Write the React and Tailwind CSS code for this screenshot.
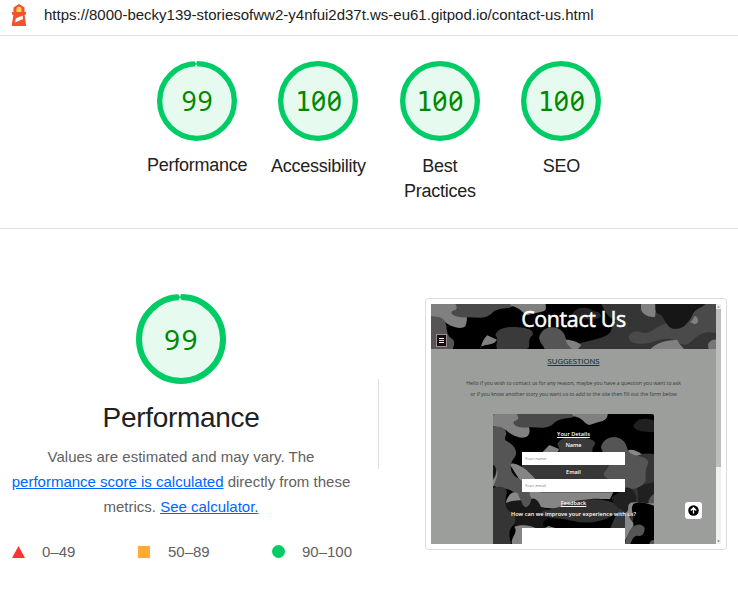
function Digits({ value, small }) {
  const size = small ? 'text-[26.5px] tracking-[0.8px]' : 'text-[28px] tracking-[1.6px]';
  return (
    <span className={`flex items-baseline leading-none text-[#008800] font-['Noto_Sans',sans-serif] slashed-zero ${size}`}>
      {value === '100' && (
        <span className="font-['DejaVu_Sans_Mono',monospace] text-[26px] tracking-[0.1px]">1</span>
      )}
      {value === '100' ? '00' : value}
    </span>
  );
}

function Gauge({ value, small }) {
  const full = value === '100';
  return (
    <div className={`grid place-items-center ${small ? 'size-20' : 'size-[90px]'}`}>
      <svg viewBox="0 0 120 120" className="col-start-1 row-start-1 size-full">
        <circle cx="60" cy="60" r="56" fill="#e6faf0" />
        <circle
          cx="60"
          cy="60"
          r="56"
          fill="none"
          stroke="#00cc66"
          strokeWidth="8"
        />
        {!full && (
          <g fill="#e6faf0">
            <path d="M56 0H60L58.8 4Z" fill="#fff" />
            <path d="M56.5 8.3H61L58.8 4.5Z" />
          </g>
        )}
      </svg>
      <div className="col-start-1 row-start-1 pl-px">
        <Digits value={value} small={small} />
      </div>
    </div>
  );
}

function Lighthouse() {
  return (
    <svg width="18" height="24" viewBox="0 0 18 24" className="ml-[10px]">
      <path d="M9 1 14.5 4.6V9H16v2.7h-1.4L16.3 23H1.7L3.4 11.7H2V9h1.5V4.6Z" fill="#f4512c" />
      <path d="M6.5 9V6.3a2.5 2.5 0 0 1 5 0V9Z" fill="#ffd65a" />
      <path d="m5.7 15.4 6.8-2.9.6 3.5-8 3.4Z" fill="#fff" />
    </svg>
  );
}

function HeaderCamo() {
  return (
    <svg viewBox="9 12 855 135" preserveAspectRatio="none" className="absolute inset-0 size-full">
      <rect x="0" y="0" width="880" height="150" fill="#000" />
      <path d="M9 12H125C108 30 124 55 112 78C100 92 62 79 45 60C38 50 22 58 9 50Z" fill="#808080" />
      <path d="M82 12H262C248 33 215 18 193 38C170 61 145 50 120 52C100 54 72 48 70 38C72 27 95 36 82 12Z" fill="#4a4a4a" />
      <path d="M9 49C25 50 40 50 49 62C62 82 49 103 72 116C84 125 77 140 74 147H9Z" fill="#555" />
      <path d="M158 147C160 130 168 115 178 106L207 119C195 137 180 130 158 140Z" fill="#808080" />
      <path d="M202 105C210 84 235 80 262 81C293 82 325 90 312 107C293 121 316 147 290 147H207C200 132 215 120 202 105Z" fill="#3a3a3a" />
      <path d="M245 12H353C352 24 360 32 340 35L298 45C281 39 280 24 250 17Z" fill="#808080" />
      <path d="M430 47C438 26 463 16 491 29C504 38 518 32 519 49C510 64 470 58 445 56Z" fill="#252525" />
      <path d="M520 12H864V147H416C454 121 497 127 536 106C560 91 543 77 565 62C540 55 530 33 520 12Z" fill="#353535" />
      <path d="M333 114C337 96 350 82 375 82C401 84 411 102 414 118C420 131 432 140 435 147H350C345 135 337 130 333 114Z" fill="#555" />
      <path d="M413 119C433 119 449 126 460 135L450 147H432C421 137 416 131 413 119Z" fill="#808080" />
      <path d="M639 12H692C680 24 684 40 681 51C658 54 637 37 639 25Z" fill="#808080" />
      <path d="M602 110C606 94 625 90 648 99C670 101 681 81 701 75C730 65 729 48 705 38L680 12H864V99C822 90 807 111 785 128C761 145 755 124 732 118C702 111 676 130 650 131C619 132 602 126 602 110Z" fill="#4a4a4a" />
      <path d="M682 12H832C820 27 801 24 792 47C779 74 759 90 735 86C712 80 708 42 690 41C680 37 682 20 682 12Z" fill="#161616" />
      <path d="M786 66C798 60 795 49 803 48C813 58 813 70 800 73Z" fill="#808080" />
      <path d="M668 147C685 130 712 119 748 120C753 132 762 139 768 147Z" fill="#808080" />
      <path d="M840 132C847 122 855 118 864 119V147H842Z" fill="#777" />
    </svg>
  );
}

function FormCamo() {
  return (
    <svg viewBox="9 12 483 390" preserveAspectRatio="none" className="absolute inset-0 size-full">
      <rect x="0" y="0" width="504" height="410" fill="#000" />
      <path d="M9 12H122C100 38 131 58 113 78C98 91 64 77 48 60L9 48Z" fill="#808080" />
      <path d="M80 12H262C248 32 215 18 193 38C170 61 145 50 120 52C91 55 73 49 70 38C73 28 94 34 80 12Z" fill="#4a4a4a" />
      <path d="M245 12H353C353 26 344 33 326 36L298 45C280 40 281 24 250 18Z" fill="#808080" />
      <path d="M430 49C437 28 460 20 492 32V65C468 67 440 66 430 49Z" fill="#202020" />
      <path d="M158 126L178 105L207 117L200 138H155Z" fill="#808080" />
      <path d="M202 104C209 82 235 80 262 81C292 83 330 91 310 110C302 120 318 145 286 150H207C205 128 214 121 202 104Z" fill="#3a3a3a" />
      <path d="M95 165H405V207H105Z" fill="#373737" />
      <path d="M412 122C428 114 449 128 460 136L448 147H425Z" fill="#888" />
      <path d="M400 162C427 140 458 125 492 132V402H340L402 260Z" fill="#353535" />
      <path d="M333 112C337 95 350 81 375 81C401 84 410 104 413 119C425 145 476 132 475 160C465 178 467 194 467 213C449 239 432 239 404 233C392 206 342 215 341 190C350 180 361 166 358 150C351 135 337 133 333 112Z" fill="#555" />
      <path d="M60 164C68 154 91 166 109 180C130 200 151 217 153 247H370L360 267C325 268 308 262 285 272C260 290 200 301 153 292C133 285 125 270 119 257Z" fill="#858585" />
      <path d="M9 49C25 50 40 50 47 62C54 77 39 82 48 92C68 101 86 121 75 141C57 160 58 187 78 201C105 217 121 230 119 255C127 272 122 289 104 292C83 282 92 250 66 244C52 231 23 239 9 225Z" fill="#555" />
      <path d="M9 164C19 168 22 184 14 199L9 207Z" fill="#151515" />
      <path d="M9 210C17 204 20 190 20 180C25 190 21 205 9 232Z" fill="#888" />
      <path d="M9 233C30 228 48 229 51 247C45 266 41 292 63 305C88 315 82 334 67 349C53 365 59 385 63 402H9Z" fill="#353535" />
      <path d="M48 276C54 254 68 242 82 249L95 276C72 271 59 274 48 283Z" fill="#888" />
      <path d="M48 279C73 267 101 274 124 267C135 260 149 276 153 292C175 296 189 306 178 320C154 335 153 348 175 356H71C76 333 81 319 66 309C52 302 48 294 48 279Z" fill="#181818" />
      <path d="M93 262L124 262C123 280 116 291 106 292C96 286 93 275 93 262Z" fill="#555" />
      <path d="M157 302C195 298 210 290 243 276C285 264 343 264 375 280C405 295 370 323 330 332C285 346 249 330 213 326C184 326 150 321 157 302Z" fill="#303030" />
      <path d="M74 350C100 341 126 348 139 355H96V402H66C61 382 85 370 74 350Z" fill="#858585" />
      <path d="M175 348L196 354H165Z" fill="#888" />
      <path d="M402 236C417 224 440 245 440 270L415 310C395 300 365 285 365 262Z" fill="#202020" />
      <path d="M440 235C465 218 475 224 492 215V270C478 290 459 300 449 286C440 280 450 254 440 235Z" fill="#202020" />
      <path d="M477 288C471 270 481 260 492 251V288Z" fill="#555" />
      <path d="M422 278C449 274 469 282 492 280V345L460 335L440 307L418 310C412 330 438 335 428 350L405 390V310C422 303 408 285 422 278Z" fill="#888" />
      <path d="M430 282C450 273 471 280 492 287V402H421C418 372 440 350 428 335C436 315 418 300 430 282Z" fill="#000" />
      <path d="M412 378C425 340 452 336 463 352C466 367 458 380 446 378C432 374 427 388 421 402H405Z" fill="#555" />
      <path d="M478 402C480 392 486 389 492 390V402Z" fill="#555" />
    </svg>
  );
}

function Thumbnail() {
  return (
    <div className="mt-[69px] flex h-[252px] w-[302px] rounded-[4px] border border-[#dadce0] p-[5px] font-['Open_Sans',sans-serif]">
      <div className="relative flex w-[285px] flex-col overflow-hidden bg-[#9b9e9a]">
        <div className="relative h-[45px] shrink-0">
          <HeaderCamo />
          <div className="relative text-center text-[21.4px] leading-[30px] tracking-[-0.35px] text-white [-webkit-text-stroke:0.5px_white]">Contact Us</div>
          <div className="absolute left-[5px] top-[30px] flex h-[13px] w-[11px] flex-col items-center justify-center gap-px border border-[#9a8c8f] bg-[#1a0b10]">
            <i className="h-px w-[5px] bg-white" />
            <i className="h-px w-[5px] bg-[#ddd]" />
            <i className="h-px w-[5px] bg-white" />
          </div>
        </div>
        <div className="mt-[7px] text-center text-[7.7px] leading-[10px] text-[#20363c] underline [-webkit-text-stroke:0.15px_#20363c]">SUGGESTIONS</div>
        <div className="mt-[12px] whitespace-nowrap text-center text-[5.15px] leading-[10.5px] text-[#303a3c]">
          <div>Hello if you wish to contact us for any reason, maybe you have a question you want to ask</div>
          <div>or if you know another story you want us to add to the site then fill out the form below</div>
        </div>
        <div className="relative ml-[62px] mt-[15px] h-[130px] w-[161px] shrink-0 overflow-hidden rounded-t-[2px] text-white">
          <FormCamo />
          <div className="relative flex flex-col items-center whitespace-nowrap text-[5.6px] font-semibold leading-[8px]">
            <div className="mt-[16px] underline">Your Details</div>
            <div className="mt-[3px]">Name</div>
            <div className="mt-[3px] h-[13px] w-[103px] bg-white pl-[3px] text-[4.2px] font-normal leading-[13px] text-[#777]">Your name</div>
            <div className="mt-[3px]">Email</div>
            <div className="mt-[3px] h-[13px] w-[103px] bg-white pl-[3px] text-[4.2px] font-normal leading-[13px] text-[#777]">Your email</div>
            <div className="mt-[7px] underline">Feedback</div>
            <div className="mt-[3px]">How can we improve your experience with us?</div>
            <div className="mt-[10px] h-[20px] w-[103px] bg-white" />
          </div>
        </div>
        <div className="absolute left-[254px] top-[198px] grid size-[17px] place-items-center rounded-[3px] bg-white">
          <svg width="11" height="11" viewBox="0 0 22 22">
            <circle cx="11" cy="11" r="10.5" fill="#000" />
            <path d="M11 17V6M5.5 11 11 5.5 16.5 11" fill="none" stroke="#fff" strokeWidth="2.6" />
          </svg>
        </div>
      </div>
      <div className="flex w-[5px] flex-col items-center justify-between bg-[#f0f0f0]">
        <svg width="5" height="5" viewBox="0 0 5 5"><path d="M1 3.5h3L2.5 2Z" fill="#888" /></svg>
        <div className="mb-auto h-[158px] w-[5px] bg-[#bdbdbd]" />
        <svg width="5" height="5" viewBox="0 0 5 5"><path d="M1 1.5h3L2.5 3Z" fill="#666" /></svg>
      </div>
    </div>
  );
}

function Category({ value, label, className = '' }) {
  return (
    <div className="flex w-[121.4px] flex-col items-center">
      <Gauge value={value} small />
      <div className={`text-center text-[18px] leading-[25px] tracking-[-0.25px] text-[#212121] ${className}`}>{label}</div>
    </div>
  );
}

export default function App() {
  return (
    <div className="h-[597px] w-[738px] overflow-hidden bg-white font-['Liberation_Sans',Arial,sans-serif]">
      <header className="flex h-9 items-start border-b border-[#e0e0e0]">
        <div className="mt-[3px]"><Lighthouse /></div>
        <div className="ml-4 mt-[5px] whitespace-nowrap text-[15px] leading-5 text-[#212121]">
          https://8000-becky139-storiesofww2-y4nfui2d37t.ws-eu61.gitpod.io/contact-us.html
        </div>
      </header>
      <section className="flex h-[193px] border-b border-[#e0e0e0] pl-[136.4px] pt-[25px]">
        <Category value="99" label="Performance" className="mt-3" />
        <Category value="100" label="Accessibility" className="mt-[13px]" />
        <Category value="100" label="Best Practices" className="mt-[13px] w-[80px]" />
        <Category value="100" label="SEO" className="mt-[13px]" />
      </section>
      <main className="flex">
        <div className="flex w-[362px] flex-col items-center pt-[65px]">
          <Gauge value="99" />
          <h1 className="mt-[16px] text-[28px] leading-[36px] tracking-[-0.3px] text-[#212121]">Performance</h1>
          <div className="mt-[8px] whitespace-nowrap text-center text-[15px] leading-[25px] text-[#616161]">
            Values are estimated and may vary. The
            <br />
            <a className="text-[#0064ff] underline">performance score is calculated</a> directly from these
            <br />
            metrics. <a className="text-[#0064ff] underline">See calculator.</a>
          </div>
          <div className="mt-[20px] flex w-full items-center text-[15px] leading-[25px] text-[#616161]">
            <svg width="13" height="12" viewBox="0 0 13 12" className="ml-3"><path d="M6.5 0 13 12H0Z" fill="#ff3333" /></svg>
            <span className="ml-[17px] w-[96px]">0–49</span>
            <i className="size-3 bg-[#ffaa33]" />
            <span className="ml-[18px] w-[104px]">50–89</span>
            <i className="size-[13px] rounded-full bg-[#00cc66]" />
            <span className="ml-[17px]">90–100</span>
          </div>
        </div>
        <div className="ml-4 mr-[46px] mt-[150px] h-[90px] w-px bg-[#e0e0e0]" />
        <Thumbnail />
      </main>
    </div>
  );
}
